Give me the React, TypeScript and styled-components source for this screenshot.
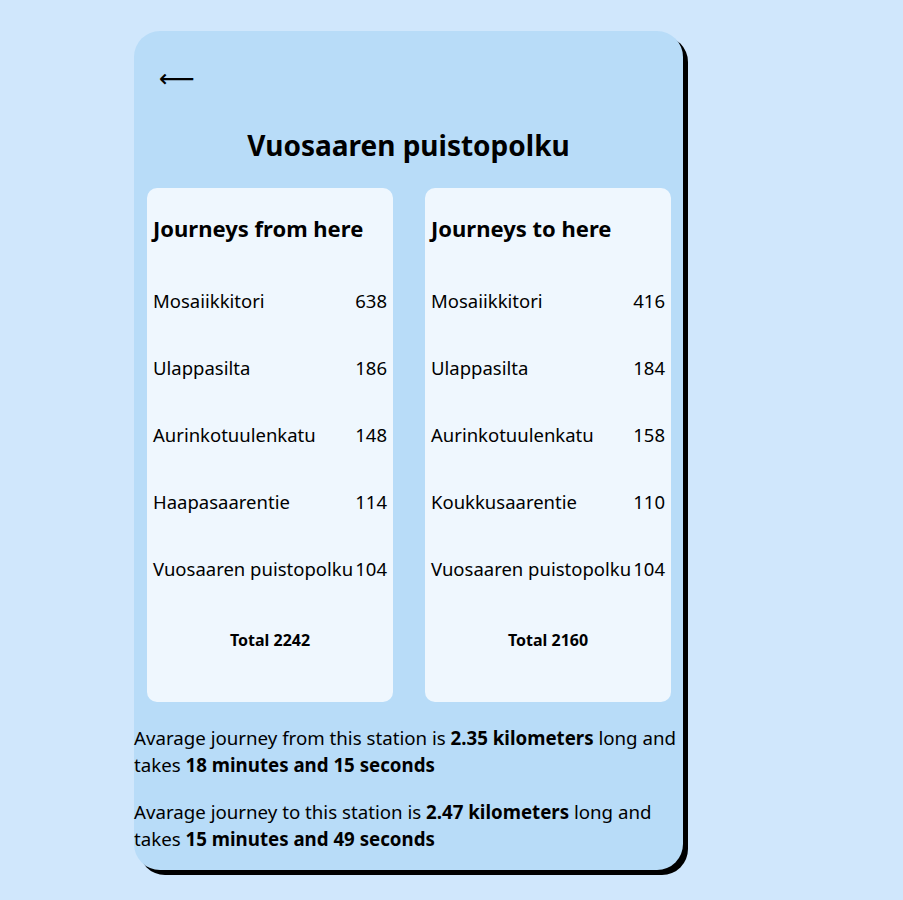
import React from 'react';
import styled, { createGlobalStyle } from 'styled-components';

interface Journey {
  name: string;
  count: number;
}

const fromHere: Journey[] = [
  { name: 'Mosaiikkitori', count: 638 },
  { name: 'Ulappasilta', count: 186 },
  { name: 'Aurinkotuulenkatu', count: 148 },
  { name: 'Haapasaarentie', count: 114 },
  { name: 'Vuosaaren puistopolku', count: 104 },
];

const toHere: Journey[] = [
  { name: 'Mosaiikkitori', count: 416 },
  { name: 'Ulappasilta', count: 184 },
  { name: 'Aurinkotuulenkatu', count: 158 },
  { name: 'Koukkusaarentie', count: 110 },
  { name: 'Vuosaaren puistopolku', count: 104 },
];

const GlobalStyle = createGlobalStyle`
  body {
    margin: 0;
    background: #d0e7fc;
    font-family: "Noto Sans", "Open Sans", sans-serif;
    color: #000;
  }
`;

const JourneyList: React.FC<{ title: string; journeys: Journey[]; total: number }> = ({
  title,
  journeys,
  total,
}) => (
  <ListCard>
    <ListTitle>{title}</ListTitle>
    <Rows>
      {journeys.map((j) => (
        <Row key={j.name}>
          <span>{j.name}</span>
          <span>{j.count}</span>
        </Row>
      ))}
    </Rows>
    <Total>Total {total}</Total>
  </ListCard>
);

export default function App() {
  return (
    <>
      <GlobalStyle />
      <Page>
        <Card>
          <BackButton aria-label="Back">⟵</BackButton>
          <Title>Vuosaaren puistopolku</Title>
          <Lists>
            <JourneyList title="Journeys from here" journeys={fromHere} total={2242} />
            <JourneyList title="Journeys to here" journeys={toHere} total={2160} />
          </Lists>
          <Summary>
            Avarage journey from this station is <b>2.35 kilometers</b> long and takes{' '}
            <b>18 minutes and 15 seconds</b>
          </Summary>
          <Summary>
            Avarage journey to this station is <b>2.47 kilometers</b> long and takes{' '}
            <b>15 minutes and 49 seconds</b>
          </Summary>
        </Card>
      </Page>
    </>
  );
}

const Page = styled.div`
  padding: 31px 0 25px 134px;
`;

const Card = styled.div`
  width: 549px;
  box-sizing: border-box;
  background: #b8dcf8;
  border-radius: 26px;
  box-shadow: 5px 5px 0 #000;
  padding: 27px 0 18px;
  display: flex;
  flex-direction: column;
`;

const BackButton = styled.button`
  align-self: flex-start;
  margin-left: 25px;
  height: 40px;
  padding: 2px 0 0;
  border: none;
  background: none;
  font-family: "DejaVu Sans", sans-serif;
  font-size: 25px;
  line-height: 38px;
  cursor: pointer;
`;

const Title = styled.h1`
  margin: 27px 0 23px;
  text-align: center;
  font-size: 28px;
  line-height: 40px;
  font-weight: 700;
`;

const Lists = styled.div`
  display: grid;
  grid-template-columns: 246px 246px;
  column-gap: 32px;
  padding: 0 12px 0 13px;
`;

const ListCard = styled.div`
  background: #eff7fe;
  border-radius: 10px;
  padding: 24px 6px 52px;
`;

const ListTitle = styled.h2`
  margin: 0 0 23px;
  font-size: 22px;
  line-height: 32px;
  font-weight: 700;
`;

const Rows = styled.div`
  display: flex;
  flex-direction: column;
`;

const Row = styled.div`
  display: flex;
  justify-content: space-between;
  align-items: center;
  height: 67px;
  font-size: 18.5px;
  white-space: nowrap;
`;

const Total = styled.div`
  margin-top: 28px;
  text-align: center;
  font-size: 16px;
  line-height: 20px;
  font-weight: 700;
`;

const Summary = styled.p`
  margin: 22px 0 0;
  font-size: 18.7px;
  line-height: 27px;

  & + & {
    margin-top: 20px;
  }
`;
